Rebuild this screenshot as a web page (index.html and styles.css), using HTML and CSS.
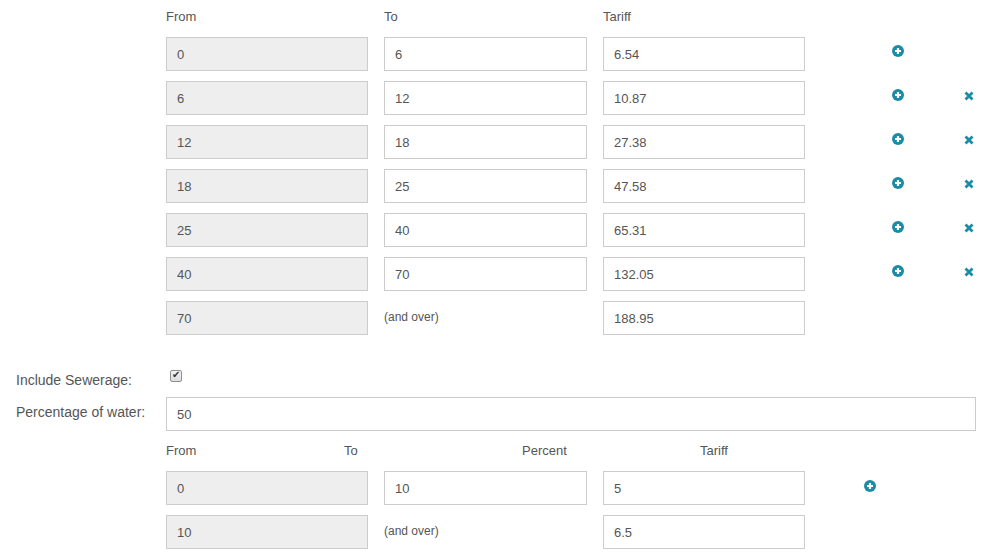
FILE: index.html
```html
<!DOCTYPE html>
<html lang="en">

<head>
    <meta charset="UTF-8">
    <title>Tariff bands</title>
    <link rel="stylesheet" href="styles.css">
</head>

<body>
    <div class="bands">
        <div class="band-head">
            <span class="c-from">From</span>
            <span class="c-to">To</span>
            <span class="c-tariff">Tariff</span>
        </div>
        <div class="band">
            <input class="c-from" value="0" disabled>
            <input class="c-to" value="6">
            <input class="c-tariff" value="6.54">
            <span class="act-add"><svg class="ico" viewBox="0 0 12 12"><circle cx="6" cy="6" r="6"/><path d="M6 3v6M3 6h6" class="cross"/></svg></span>
        </div>
        <div class="band">
            <input class="c-from" value="6" disabled>
            <input class="c-to" value="12">
            <input class="c-tariff" value="10.87">
            <span class="act-add"><svg class="ico" viewBox="0 0 12 12"><circle cx="6" cy="6" r="6"/><path d="M6 3v6M3 6h6" class="cross"/></svg></span>
            <span class="act-del"><svg class="ico-x" viewBox="0 0 10 10"><path d="M1.5 1.5l7 7M8.5 1.5l-7 7"/></svg></span>
        </div>
        <div class="band">
            <input class="c-from" value="12" disabled>
            <input class="c-to" value="18">
            <input class="c-tariff" value="27.38">
            <span class="act-add"><svg class="ico" viewBox="0 0 12 12"><circle cx="6" cy="6" r="6"/><path d="M6 3v6M3 6h6" class="cross"/></svg></span>
            <span class="act-del"><svg class="ico-x" viewBox="0 0 10 10"><path d="M1.5 1.5l7 7M8.5 1.5l-7 7"/></svg></span>
        </div>
        <div class="band">
            <input class="c-from" value="18" disabled>
            <input class="c-to" value="25">
            <input class="c-tariff" value="47.58">
            <span class="act-add"><svg class="ico" viewBox="0 0 12 12"><circle cx="6" cy="6" r="6"/><path d="M6 3v6M3 6h6" class="cross"/></svg></span>
            <span class="act-del"><svg class="ico-x" viewBox="0 0 10 10"><path d="M1.5 1.5l7 7M8.5 1.5l-7 7"/></svg></span>
        </div>
        <div class="band">
            <input class="c-from" value="25" disabled>
            <input class="c-to" value="40">
            <input class="c-tariff" value="65.31">
            <span class="act-add"><svg class="ico" viewBox="0 0 12 12"><circle cx="6" cy="6" r="6"/><path d="M6 3v6M3 6h6" class="cross"/></svg></span>
            <span class="act-del"><svg class="ico-x" viewBox="0 0 10 10"><path d="M1.5 1.5l7 7M8.5 1.5l-7 7"/></svg></span>
        </div>
        <div class="band">
            <input class="c-from" value="40" disabled>
            <input class="c-to" value="70">
            <input class="c-tariff" value="132.05">
            <span class="act-add"><svg class="ico" viewBox="0 0 12 12"><circle cx="6" cy="6" r="6"/><path d="M6 3v6M3 6h6" class="cross"/></svg></span>
            <span class="act-del"><svg class="ico-x" viewBox="0 0 10 10"><path d="M1.5 1.5l7 7M8.5 1.5l-7 7"/></svg></span>
        </div>
        <div class="band">
            <input class="c-from" value="70" disabled>
            <span class="c-to over">(and over)</span>
            <input class="c-tariff" value="188.95">
        </div>
    </div>

    <div class="form-row sewer">
        <label>Include Sewerage:</label>
        <input type="checkbox" class="chk" checked>
    </div>
    <div class="form-row pct">
        <label>Percentage of water:</label>
        <input class="wide" value="50">
    </div>

    <div class="bands sewer-bands">
        <div class="band-head four">
            <span>From</span>
            <span>To</span>
            <span>Percent</span>
            <span>Tariff</span>
        </div>
        <div class="band">
            <input class="c-from" value="0" disabled>
            <input class="c-to" value="10">
            <input class="c-tariff" value="5">
            <span class="act-add short"><svg class="ico" viewBox="0 0 12 12"><circle cx="6" cy="6" r="6"/><path d="M6 3v6M3 6h6" class="cross"/></svg></span>
        </div>
        <div class="band">
            <input class="c-from" value="10" disabled>
            <span class="c-to over">(and over)</span>
            <input class="c-tariff" value="6.5">
        </div>
    </div>
</body>

</html>
```

FILE: styles.css
```css
html,
body {
    margin: 0;
    padding: 0;
    background: #fff;
    font-family: "Liberation Sans", Arial, sans-serif;
    color: #555;
}

.bands {
    padding-left: 166px;
}

.band-head {
    display: flex;
    gap: 16px;
    padding-top: 7px;
    height: 20px;
    line-height: 20px;
    font-size: 13px;
    margin-bottom: 10px;
}

.band {
    display: flex;
    gap: 16px;
    height: 34px;
    margin-bottom: 10px;
}

.c-from { width: 202px; }
.c-to { width: 203px; }
.c-tariff { width: 202px; }

input {
    box-sizing: border-box;
    height: 34px;
    margin: 0;
    padding: 0 10px;
    border: 1px solid #ccc;
    border-radius: 0;
    background: #fff;
    font-family: inherit;
    font-size: 13px;
    color: #555;
    outline: none;
}

input[disabled] {
    background: #eee;
}

.over {
    font-size: 12px;
    line-height: 16px;
    padding-top: 8px;
    box-sizing: border-box;
}

.act-add {
    width: 83px;
    display: flex;
    align-items: center;
    justify-content: flex-end;
    padding-bottom: 6px;
}

.act-add.short {
    width: 55px;
    padding-bottom: 5px;
}

.act-del {
    width: 54px;
    display: flex;
    align-items: center;
    justify-content: flex-end;
    padding-bottom: 4px;
}

.ico {
    width: 12px;
    height: 12px;
    fill: #1a8ca6;
}

.ico .cross {
    stroke: #fff;
    stroke-width: 2.2;
    fill: none;
}

.ico-x {
    width: 10px;
    height: 10px;
    stroke: #1a8ca6;
    stroke-width: 2.8;
    fill: none;
}

.form-row {
    display: flex;
    padding-left: 16px;
    font-size: 14px;
}

.form-row label {
    width: 150px;
}

.sewer {
    margin-top: 33px;
    height: 22px;
}

.sewer label {
    padding-top: 2px;
    line-height: 20px;
}

.chk {
    appearance: none;
    -webkit-appearance: none;
    width: 12px;
    height: 12px;
    padding: 0;
    margin: 2px 0 0 4px;
    border: 1px solid #8f8f8f;
    border-radius: 2px;
    background: linear-gradient(#f4f4f4, #dcdcdc);
    position: relative;
}

.chk:checked::after {
    content: "\2714";
    position: absolute;
    left: 1px;
    top: -2px;
    font-size: 10px;
    color: #333;
}

.pct {
    margin-top: 7px;
}

.pct label {
    line-height: 30px;
}

.wide {
    width: 810px;
}

.sewer-bands .band-head {
    gap: 0;
    padding-top: 10px;
}

.band-head.four span {
    width: 178px;
}
```
